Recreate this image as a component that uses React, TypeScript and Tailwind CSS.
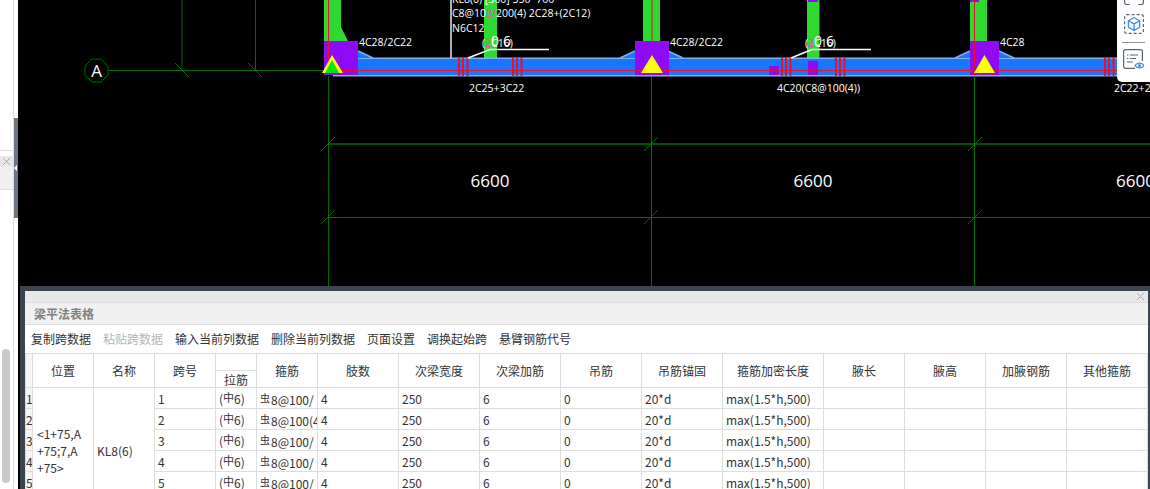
import React from 'react';

const columns = [
  { w: 'w-[7px]', title: '' },
  { w: 'w-[61px]', title: '位置' },
  { w: 'w-[61px]', title: '名称' },
  { w: 'w-[61px]', title: '跨号' },
  { w: 'w-[41px]', title: '拉筋' },
  { w: 'w-[61px]', title: '箍筋' },
  { w: 'w-[81px]', title: '肢数' },
  { w: 'w-[81px]', title: '次梁宽度' },
  { w: 'w-[81px]', title: '次梁加筋' },
  { w: 'w-[81px]', title: '吊筋' },
  { w: 'w-[81px]', title: '吊筋锚固' },
  { w: 'w-[101px]', title: '箍筋加密长度' },
  { w: 'w-[81px]', title: '腋长' },
  { w: 'w-[81px]', title: '腋高' },
  { w: 'w-[81px]', title: '加腋钢筋' },
  { w: 'w-[81px]', title: '其他箍筋' },
];

const stirrups = ['8@100/', '8@100(4', '8@100/', '8@100/', '8@100/', '8@100/'];
const tools = ['复制跨数据', '粘贴跨数据', '输入当前列数据', '删除当前列数据', '页面设置', '调换起始跨', '悬臂钢筋代号'];

const GREEN = '#006f00';
const label = "font-['Open_Sans'] text-[10.5px] fill-white";

function Tick({ x, y }: { x: number; y: number }) {
  return <line x1={x - 7} y1={y - 7} x2={x + 7} y2={y + 7} stroke={GREEN} strokeWidth="1" />;
}

function TickUp({ x, y }: { x: number; y: number }) {
  return <line x1={x - 7} y1={y + 7} x2={x + 7} y2={y - 7} stroke={GREEN} strokeWidth="1" />;
}

function Stirrups({ x }: { x: number }) {
  return (
    <g fill="#e8102a">
      <rect x={x} y="58" width="2" height="18" />
      <rect x={x + 4} y="58" width="2" height="18" />
      <rect x={x + 8.5} y="58" width="2" height="18" />
    </g>
  );
}

function Haunch({ x, dir }: { x: number; dir: 1 | -1 }) {
  const pts = `${x},51 ${x + dir * 15},58 ${x},58`;
  return (
    <g>
      <polygon points={pts} fill="#1a75ff" />
      <line x1={x} y1="51" x2={x + dir * 15} y2="58" stroke="#7fb0ee" strokeWidth="1.5" />
    </g>
  );
}

function Drawing() {
  return (
    <svg className="block w-[1132px] h-[286px]" viewBox="18 0 1132 286">
      {/* axis lines */}
      <line x1="109" y1="70.5" x2="1117" y2="70.5" stroke={GREEN} />
      <line x1="182" y1="0" x2="182" y2="70" stroke={GREEN} />
      <line x1="255.5" y1="0" x2="255.5" y2="70" stroke={GREEN} />
      <Tick x={182} y={70} />
      <Tick x={255} y={70} />
      <polygon points="92,59 101,59 108,66 108,75 101,82 92,82 85,75 85,66" fill="none" stroke={GREEN} />
      <text x="96.5" y="77" textAnchor="middle" className="font-['Open_Sans'] text-[17px] fill-white">A</text>

      <line x1="328.5" y1="76" x2="328.5" y2="286" stroke={GREEN} />
      <line x1="651.5" y1="76" x2="651.5" y2="286" stroke={GREEN} />
      <line x1="974.5" y1="76" x2="974.5" y2="286" stroke={GREEN} />
      <line x1="328" y1="144" x2="1150" y2="144" stroke={GREEN} strokeWidth="1.5" />
      <line x1="328" y1="217.5" x2="1150" y2="217.5" stroke={GREEN} />
      {[328, 651, 975].map((x) => (
        <g key={x}>
          <TickUp x={x} y={144} />
          <TickUp x={x} y={217} />
        </g>
      ))}
      <text x="490" y="187" textAnchor="middle" className="font-['Open_Sans'] text-[17px] fill-white">6600</text>
      <text x="813" y="187" textAnchor="middle" className="font-['Open_Sans'] text-[17px] fill-white">6600</text>
      <text x="1116" y="187" className="font-['Open_Sans'] text-[17px] fill-white">6600</text>

      {/* columns above beam */}
      <polygon points="324,0 341,0 341,27 348,41 324,41" fill="#2fd92f" />
      <rect x="643" y="0" width="17" height="41" fill="#2fd92f" />
      <rect x="970" y="0" width="17" height="41" fill="#2fd92f" />
      <rect x="484" y="0" width="13" height="58" fill="#2fd92f" />
      <rect x="807" y="0" width="12.5" height="58" fill="#2fd92f" />

      {/* beam */}
      <rect x="333" y="57.5" width="784" height="19" fill="#7fb0ee" />
      <rect x="333" y="59" width="784" height="16" fill="#1a75ff" />
      <Haunch x={358} dir={1} />
      <Haunch x={635} dir={-1} />
      <Haunch x={668} dir={1} />
      <Haunch x={970} dir={-1} />
      <Haunch x={999} dir={1} />

      {/* supports */}
      <rect x="324" y="41" width="34" height="34" fill="#8f0af5" />
      <rect x="635" y="41" width="34" height="34" fill="#8f0af5" />
      <rect x="970" y="41" width="29" height="34" fill="#8f0af5" />
      <rect x="769" y="66" width="10" height="9" fill="#8f0af5" />
      <rect x="808" y="61" width="10" height="14" fill="#8f0af5" />
      <rect x="808" y="0" width="10" height="2" fill="#8f0af5" />
      <rect x="970" y="0" width="9" height="2" fill="#8f0af5" />

      <line x1="328" y1="70.5" x2="1117" y2="70.5" stroke="#e8102a" />
      <line x1="328.5" y1="0" x2="328.5" y2="60" stroke="#e8102a" />
      <line x1="652" y1="0" x2="652" y2="41" stroke="#e8102a" />
      <line x1="974.5" y1="0" x2="974.5" y2="76" stroke="#e8102a" />

      <polygon points="332,55 343,73 322,73" fill="#ffff00" />
      <polygon points="332,60 339,73 325,73" fill="#00e800" />
      <polygon points="652,55 663,73 641,73" fill="#ffff00" />
      <polygon points="984.5,55 995,73 974,73" fill="#ffff00" />

      <Stirrups x={458} />
      <Stirrups x={512} />
      <Stirrups x={781} />
      <Stirrups x={835} />
      <Stirrups x={1104} />

      {/* annotations */}
      <line x1="451" y1="0" x2="451" y2="58" stroke="#e8e8e8" strokeWidth="1.5" />
      <polyline points="468,58 490,49.5 549,49.5" fill="none" stroke="#fff" strokeWidth="1.5" />
      <polyline points="791,58 812,49.5 871,49.5" fill="none" stroke="#fff" strokeWidth="1.5" />

      <text x="452" y="3" className={label}>KL8(6) [300] 350*700</text>
      <text x="452" y="17" className={label}>
        C8@10<tspan fill="#ff33cc">0/</tspan>200(4) 2C28+(2C12)
      </text>
      <text x="452" y="32" className={label}>N6C12</text>
      <text x="359" y="46" className={label}>4C28/2C22</text>
      <text x="670" y="46" className={label}>4C28/2C22</text>
      <text x="1000" y="46" className={label}>4C28</text>
      <text x="469" y="92" className={label}>2C25+3C22</text>
      <text x="777" y="92" className={label}>4C20(C8@100(4))</text>
      <text x="1114" y="92" className={label}>2C22+2C25</text>

      <text x="482" y="47" className={label}>(<tspan fill="#ff33cc">2</tspan>C16)</text>
      <text x="491" y="46" className="font-['Open_Sans'] text-[14px] fill-white">0<tspan dx="4">6</tspan></text>
      <text x="805" y="47" className={label}>(<tspan fill="#ff33cc">2</tspan>C16)</text>
      <text x="814" y="46" className="font-['Open_Sans'] text-[14px] fill-white">0<tspan dx="4">6</tspan></text>
    </svg>
  );
}

function ViewTools() {
  return (
    <div className="absolute top-0 right-0 w-[33px] h-[82px] bg-white rounded-bl-[5px] flex flex-col items-center">
      <svg className="block w-[20px] h-[5px]" viewBox="0 0 20 5" fill="none" stroke="#5a6472" strokeWidth="1.2">
        <path d="M.6 0v2.5a2 2 0 0 0 2 2h3M19.4 0v2.5a2 2 0 0 1-2 2h-3" />
      </svg>
      <svg className="block w-[20px] h-[20px] mt-[9px]" viewBox="0 0 20 20" fill="none">
        <rect x=".6" y=".6" width="18.8" height="18.8" rx="2" stroke="#5a6472" strokeWidth="1.2" strokeDasharray="3 2" />
        <path d="M10 3.5l5.6 3.2v6.6L10 16.5l-5.6-3.2V6.7zM4.4 6.7l5.6 3.2 5.6-3.2M10 9.9v6.6" stroke="#3b8df0" strokeWidth="1.3" strokeLinejoin="round" />
      </svg>
      <div className="w-[23px] h-px bg-[#8a929c] mt-[8px]" />
      <svg className="block w-[21px] h-[21px] mt-[6px]" viewBox="0 0 21 21" fill="none">
        <path d="M12 19.4H2.6a2 2 0 0 1-2-2V2.6a2 2 0 0 1 2-2h14.8a2 2 0 0 1 2 2V12" stroke="#5a6472" strokeWidth="1.2" />
        <path d="M4 6h1.5M7 6h8M4 9.5h1.5M7 9.5h6M4 13h6" stroke="#5a6472" strokeWidth="1.1" />
        <path d="M12 16.5c2-3.2 7-3.2 9 0-2 3.2-7 3.2-9 0z" fill="#fff" stroke="#3b8df0" strokeWidth="1.2" />
        <circle cx="16.5" cy="16.5" r="1.5" fill="#3b8df0" />
      </svg>
    </div>
  );
}

function LeftStrip() {
  return (
    <div className="w-[18px] shrink-0 flex bg-white">
      <div className="w-[13px] flex flex-col">
        <div className="h-[151px] border-b border-[#dddddd]" />
        <div className="h-[5px]" />
        <div className="h-[11px] bg-[#e8e8e8] flex items-center justify-center">
          <svg className="w-[7px] h-[7px]" viewBox="0 0 7 7" stroke="#a8a8a8">
            <path d="M0 0l7 7M7 0L0 7" />
          </svg>
        </div>
        <div className="h-[23px] bg-[#f0f0f0] border-b border-[#dddddd]" />
        <div className="h-[159px]" />
        <div className="ml-[2px] w-[8px] h-[134px] rounded-[4px] bg-[#c9c9c9]" />
      </div>
      <div className="w-px bg-[#dddddd]" />
      <div className="w-[4px] flex flex-col">
        <div className="h-[118px]" />
        <div className="h-[100px] bg-[#6b7785] flex items-center">
          <div className="w-0 h-0 border-y-[3px] border-y-transparent border-r-[3px] border-r-white" />
        </div>
      </div>
    </div>
  );
}

const cell = 'border border-[#dddddd] px-[3px] py-0 h-[21px] text-left overflow-hidden whitespace-nowrap font-normal';
const head = 'border border-[#dddddd] p-0 text-center font-normal whitespace-nowrap';

function BeamTable() {
  return (
    <table className="table-fixed border-collapse w-[1122px] text-[12px] leading-[15px] text-[#333333]">
      <colgroup>
        {columns.map((c, i) => (
          <col key={i} className={c.w} />
        ))}
      </colgroup>
      <thead>
        <tr className="h-[17px]">
          {columns.map((c, i) =>
            i === 4 ? (
              <th key={i} className={head} />
            ) : (
              <th key={i} rowSpan={2} className={i === 0 ? `${head} bg-[#f5f5f5]` : head}>
                {c.title}
              </th>
            ),
          )}
        </tr>
        <tr className="h-[17px]">
          <th className={head}>拉筋</th>
        </tr>
      </thead>
      <tbody>
        {stirrups.map((s, i) => (
          <tr key={i} className="h-[21px]">
            <td className="border border-[#dddddd] p-0 bg-[#f5f5f5] overflow-hidden">{i + 1}</td>
            {i === 0 && (
              <>
                <td rowSpan={6} className="border border-[#dddddd] px-[4px] py-0 leading-[17px]">
                  <div>&lt;1+75,A</div>
                  <div>+75;7,A</div>
                  <div>+75&gt;</div>
                </td>
                <td rowSpan={6} className="border border-[#dddddd] px-[3px] py-0">KL8(6)</td>
              </>
            )}
            <td className={cell}>{i + 1}</td>
            <td className={cell}>
              (<span className="text-[11px] align-[2px]">中</span>6)
            </td>
            <td className={cell}>
              <span className="text-[10px] align-[3px] mr-[1px]">虫</span>
              {s}
            </td>
            <td className={cell}>4</td>
            <td className={cell}>250</td>
            <td className={cell}>6</td>
            <td className={cell}>0</td>
            <td className={cell}>20*d</td>
            <td className={cell}>max(1.5*h,500)</td>
            <td className={cell} />
            <td className={cell} />
            <td className={cell} />
            <td className={cell} />
          </tr>
        ))}
      </tbody>
    </table>
  );
}

function TableDialog() {
  return (
    <div className="ml-[2px] flex-1 border-t-[5px] border-l-[5px] border-r-[2px] border-[#3c4450] bg-white overflow-hidden">
      <div className="h-[12px] bg-[#e8e8e8] border-b border-[#dddddd] flex items-center justify-end pr-[4px]">
        <svg className="w-[7px] h-[7px]" viewBox="0 0 7 7" stroke="#b0b0b0">
          <path d="M0 0l7 7M7 0L0 7" />
        </svg>
      </div>
      <div className="h-[22px] bg-[#f0f0f0] border-b border-[#dddddd] flex items-center pl-[9px] text-[12px] font-bold text-[#808080]">
        梁平法表格
      </div>
      <div className="h-[28px] flex items-center gap-[12px] pl-[6px] text-[12px] text-[#333333]">
        {tools.map((t, i) => (
          <span key={t} className={i === 1 ? 'text-[#b5b5b5]' : ''}>
            {t}
          </span>
        ))}
      </div>
      <BeamTable />
    </div>
  );
}

export default function App() {
  return (
    <div className="w-[1150px] h-[489px] overflow-hidden flex bg-black font-['Noto_Sans_CJK_SC','Noto_Sans',sans-serif]">
      <LeftStrip />
      <div className="flex-1 flex flex-col min-w-0">
        <div className="relative h-[286px] shrink-0 bg-black overflow-hidden">
          <Drawing />
          <ViewTools />
        </div>
        <TableDialog />
      </div>
    </div>
  );
}
